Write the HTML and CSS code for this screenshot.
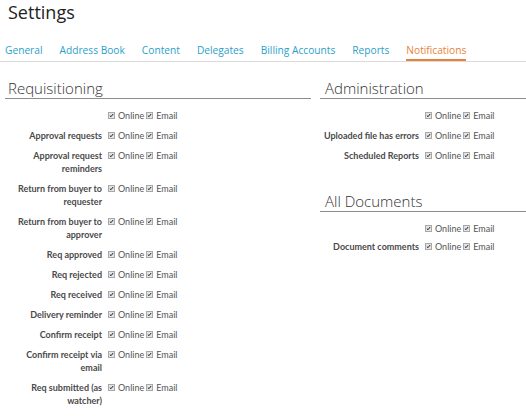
FILE: index.html
```html
<!DOCTYPE html>
<html>
<head>
<meta charset="utf-8">
<link rel="stylesheet" href="styles.css">
</head>
<body>
<h1 class="title">Settings</h1>
<nav class="tabs">
  <a class="tab">General</a>
  <a class="tab">Address Book</a>
  <a class="tab">Content</a>
  <a class="tab">Delegates</a>
  <a class="tab">Billing Accounts</a>
  <a class="tab">Reports</a>
  <a class="tab active">Notifications</a>
</nav>
<div class="columns">
  <div class="col col-left">
    <section class="section">
      <h2 class="section-title">Requisitioning</h2>
      <div class="rows">
        <div class="row"><div class="label"></div><div class="opts"><span class="cb"></span><span class="opt">Online</span><span class="cb"></span><span class="opt">Email</span></div></div>
        <div class="row"><div class="label">Approval requests</div><div class="opts"><span class="cb"></span><span class="opt">Online</span><span class="cb"></span><span class="opt">Email</span></div></div>
        <div class="row"><div class="label">Approval request reminders</div><div class="opts"><span class="cb"></span><span class="opt">Online</span><span class="cb"></span><span class="opt">Email</span></div></div>
        <div class="row"><div class="label">Return from buyer to requester</div><div class="opts"><span class="cb"></span><span class="opt">Online</span><span class="cb"></span><span class="opt">Email</span></div></div>
        <div class="row"><div class="label">Return from buyer to approver</div><div class="opts"><span class="cb"></span><span class="opt">Online</span><span class="cb"></span><span class="opt">Email</span></div></div>
        <div class="row"><div class="label">Req approved</div><div class="opts"><span class="cb"></span><span class="opt">Online</span><span class="cb"></span><span class="opt">Email</span></div></div>
        <div class="row"><div class="label">Req rejected</div><div class="opts"><span class="cb"></span><span class="opt">Online</span><span class="cb"></span><span class="opt">Email</span></div></div>
        <div class="row"><div class="label">Req received</div><div class="opts"><span class="cb"></span><span class="opt">Online</span><span class="cb"></span><span class="opt">Email</span></div></div>
        <div class="row"><div class="label">Delivery reminder</div><div class="opts"><span class="cb"></span><span class="opt">Online</span><span class="cb"></span><span class="opt">Email</span></div></div>
        <div class="row"><div class="label">Confirm receipt</div><div class="opts"><span class="cb"></span><span class="opt">Online</span><span class="cb"></span><span class="opt">Email</span></div></div>
        <div class="row"><div class="label">Confirm receipt via email</div><div class="opts"><span class="cb"></span><span class="opt">Online</span><span class="cb"></span><span class="opt">Email</span></div></div>
        <div class="row"><div class="label">Req submitted (as watcher)</div><div class="opts"><span class="cb"></span><span class="opt">Online</span><span class="cb"></span><span class="opt">Email</span></div></div>
      </div>
    </section>
  </div>
  <div class="col col-right">
    <section class="section">
      <h2 class="section-title">Administration</h2>
      <div class="rows">
        <div class="row"><div class="label"></div><div class="opts"><span class="cb"></span><span class="opt">Online</span><span class="cb"></span><span class="opt">Email</span></div></div>
        <div class="row"><div class="label">Uploaded file has errors</div><div class="opts"><span class="cb"></span><span class="opt">Online</span><span class="cb"></span><span class="opt">Email</span></div></div>
        <div class="row"><div class="label">Scheduled Reports</div><div class="opts"><span class="cb"></span><span class="opt">Online</span><span class="cb"></span><span class="opt">Email</span></div></div>
      </div>
    </section>
    <section class="section section-next">
      <h2 class="section-title">All Documents</h2>
      <div class="rows rows-tight">
        <div class="row"><div class="label"></div><div class="opts"><span class="cb"></span><span class="opt">Online</span><span class="cb"></span><span class="opt">Email</span></div></div>
        <div class="row"><div class="label">Document comments</div><div class="opts"><span class="cb"></span><span class="opt">Online</span><span class="cb"></span><span class="opt">Email</span></div></div>
      </div>
    </section>
  </div>
</div>
</body>
</html>
```

FILE: styles.css
```css
html, body {
  margin: 0;
  padding: 0;
  background: #ffffff;
}
body {
  width: 526px;
  font-family: "Open Sans", "Liberation Sans", sans-serif;
  color: #333;
}
.title {
  margin: 0;
  padding: 0 0 0 8px;
  font-family: "Open Sans", sans-serif;
  font-weight: 400;
  font-size: 18px;
  line-height: 24px;
  color: #222;
}
.tabs {
  display: flex;
  gap: 17px;
  margin-top: 19px;
  padding-left: 5px;
  border-bottom: 1px solid #dcdcdc;
}
.tab {
  font-family: "Open Sans", sans-serif;
  font-size: 10.2px;
  line-height: 15px;
  color: #2b9fc9;
  padding-bottom: 1px;
  border-bottom: 2px solid transparent;
}
.tab.active {
  color: #e8823a;
  border-bottom-color: #e8823a;
}
.columns {
  display: flex;
  margin-top: 16px;
}
.col-left {
  width: 306px;
  margin-left: 5px;
}
.col-right {
  flex: 1;
  margin-left: 9px;
}
.section-title {
  margin: 0;
  padding-left: 3px;
  font-family: "Open Sans", sans-serif;
  font-weight: 300;
  font-size: 15px;
  line-height: 20px;
  color: #333;
  border-bottom: 1px solid #8c8c8c;
}
.col-right .section-title {
  padding-left: 5px;
}
.section-next {
  margin-top: 29px;
}
.rows {
  display: flex;
  flex-direction: column;
  gap: 7px;
  padding-top: 10px;
}
.rows-tight {
  gap: 5px;
}
.row {
  display: flex;
  align-items: flex-start;
}
.label {
  width: 103px;
  flex: none;
  text-align: right;
  font-family: "Lato", sans-serif;
  font-weight: 700;
  font-size: 9px;
  line-height: 13px;
  color: #4a4a4a;
  padding-right: 6px;
  box-sizing: border-box;
}
.col-right .label {
  width: 105px;
}
.opts {
  display: flex;
  align-items: center;
  height: 13px;
  font-family: "Lato", sans-serif;
  font-size: 9px;
  color: #555;
}
.cb {
  display: inline-block;
  width: 7px;
  height: 7px;
  box-sizing: border-box;
  border: 1px solid #a8a8a8;
  background: #e4e4e4 url("data:image/svg+xml,%3Csvg xmlns='http://www.w3.org/2000/svg' viewBox='0 0 7 7'%3E%3Cpath d='M1.2 3.6 L2.8 5.2 L5.8 1.4' fill='none' stroke='%23222' stroke-width='1.4'/%3E%3C/svg%3E") center/100% 100% no-repeat;
}
.opt {
  margin-left: 3px;
  margin-right: 2px;
}
.opt:last-child {
  margin-right: 0;
}
```
